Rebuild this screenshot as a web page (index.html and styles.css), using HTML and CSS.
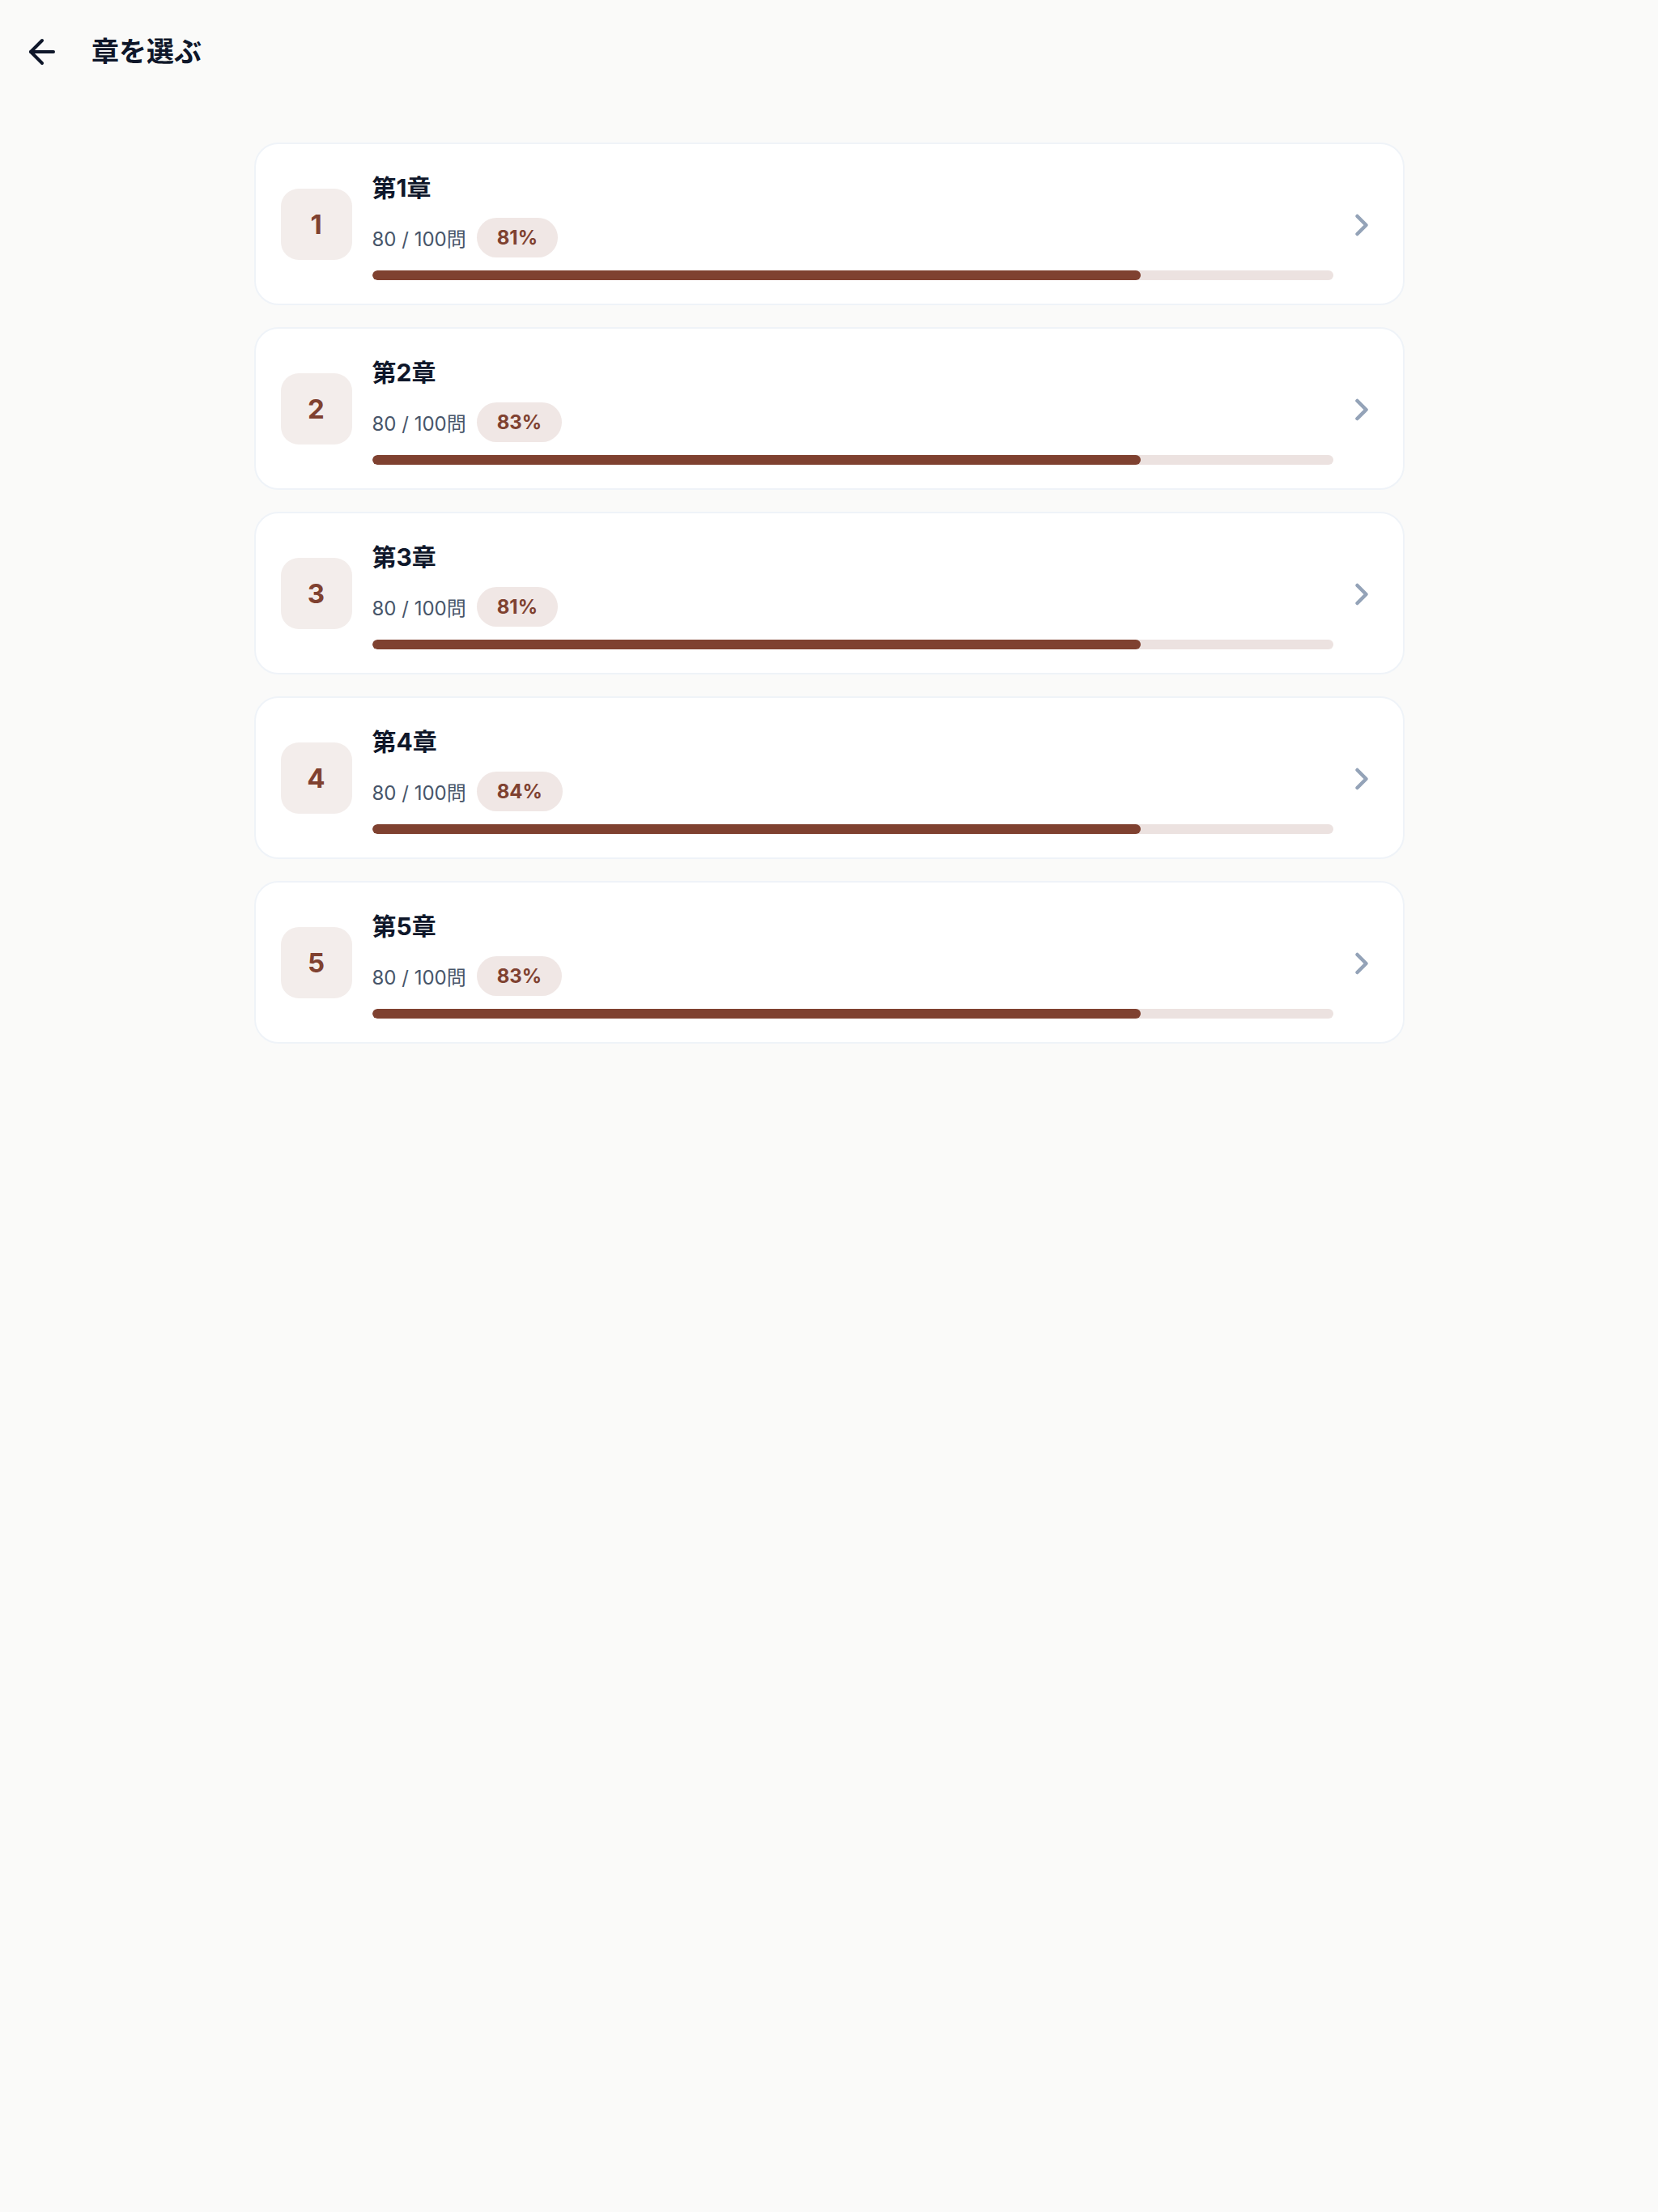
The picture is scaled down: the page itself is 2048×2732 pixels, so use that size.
FILE: index.html
```html
<!DOCTYPE html>
<html lang="ja">
<head>
<meta charset="utf-8">
<title>章を選ぶ</title>
<link rel="stylesheet" href="styles.css">
</head>
<body>
<header class="header">
  <svg class="back" viewBox="0 0 24 24" fill="none" stroke="currentColor" stroke-width="2" stroke-linecap="round" stroke-linejoin="round"><path d="m12 19-7-7 7-7"/><path d="M19 12H5"/></svg>
  <h1 class="title">章を選ぶ</h1>
</header>
<main class="list">
  <div class="card">
    <div class="badge">1</div>
    <div class="info">
      <div class="name">第1章</div>
      <div class="row"><span class="count">80 / 100問</span><span class="pill">81%</span></div>
      <div class="track"><div class="fill" style="width:80%"></div></div>
    </div>
    <svg class="chev" viewBox="0 0 24 24" fill="none" stroke="currentColor" stroke-width="2.5" stroke-linecap="round" stroke-linejoin="round"><path d="m9 18 6-6-6-6"/></svg>
  </div>
  <div class="card">
    <div class="badge">2</div>
    <div class="info">
      <div class="name">第2章</div>
      <div class="row"><span class="count">80 / 100問</span><span class="pill">83%</span></div>
      <div class="track"><div class="fill" style="width:80%"></div></div>
    </div>
    <svg class="chev" viewBox="0 0 24 24" fill="none" stroke="currentColor" stroke-width="2.5" stroke-linecap="round" stroke-linejoin="round"><path d="m9 18 6-6-6-6"/></svg>
  </div>
  <div class="card">
    <div class="badge">3</div>
    <div class="info">
      <div class="name">第3章</div>
      <div class="row"><span class="count">80 / 100問</span><span class="pill">81%</span></div>
      <div class="track"><div class="fill" style="width:80%"></div></div>
    </div>
    <svg class="chev" viewBox="0 0 24 24" fill="none" stroke="currentColor" stroke-width="2.5" stroke-linecap="round" stroke-linejoin="round"><path d="m9 18 6-6-6-6"/></svg>
  </div>
  <div class="card">
    <div class="badge">4</div>
    <div class="info">
      <div class="name">第4章</div>
      <div class="row"><span class="count">80 / 100問</span><span class="pill">84%</span></div>
      <div class="track"><div class="fill" style="width:80%"></div></div>
    </div>
    <svg class="chev" viewBox="0 0 24 24" fill="none" stroke="currentColor" stroke-width="2.5" stroke-linecap="round" stroke-linejoin="round"><path d="m9 18 6-6-6-6"/></svg>
  </div>
  <div class="card">
    <div class="badge">5</div>
    <div class="info">
      <div class="name">第5章</div>
      <div class="row"><span class="count">80 / 100問</span><span class="pill">83%</span></div>
      <div class="track"><div class="fill" style="width:80%"></div></div>
    </div>
    <svg class="chev" viewBox="0 0 24 24" fill="none" stroke="currentColor" stroke-width="2.5" stroke-linecap="round" stroke-linejoin="round"><path d="m9 18 6-6-6-6"/></svg>
  </div>
</main>
</body>
</html>
```
FILE: styles.css
```css
html, body {
  margin: 0;
  padding: 0;
}
body {
  background: #fafaf9;
  font-family: Inter, "Noto Sans CJK JP", sans-serif;
  color: #0f172a;
  min-height: 2732px;
}
.header {
  height: 128px;
  display: flex;
  align-items: center;
  padding-left: 28px;
  gap: 37px;
}
.back {
  width: 48px;
  height: 48px;
  color: #0f172a;
  flex: none;
}
.title {
  margin: 0;
  font-size: 34px;
  font-weight: 700;
  line-height: 1.4;
  color: #0f172a;
}
.list {
  width: 1421px;
  margin: 48px auto 0;
  display: flex;
  flex-direction: column;
  gap: 27px;
}
.card {
  box-sizing: border-box;
  height: 201px;
  background: #ffffff;
  border: 2px solid #eff3f8;
  border-radius: 30px;
  display: flex;
  align-items: center;
  padding: 0 29px 0 31px;
}
.badge {
  width: 88px;
  height: 88px;
  flex: none;
  border-radius: 22px;
  background: #f3edeb;
  color: #7f4130;
  font-size: 33px;
  font-weight: 700;
  display: flex;
  align-items: center;
  justify-content: center;
  margin-right: 25px;
}
.info {
  flex: 1;
  display: flex;
  flex-direction: column;
  padding-top: 4px;
}
.name {
  font-size: 30px;
  font-weight: 700;
  line-height: 42px;
  color: #0f172a;
}
.row {
  margin-top: 15px;
  height: 50px;
  display: flex;
  align-items: center;
  gap: 13px;
}
.count {
  font-size: 24px;
  color: #475569;
}
.pill {
  height: 49px;
  box-sizing: border-box;
  padding: 0 25px;
  border-radius: 25px;
  background: #f0e7e5;
  color: #7f4130;
  font-size: 24px;
  font-weight: 700;
  display: flex;
  align-items: center;
}
.track {
  margin-top: 16px;
  height: 12px;
  border-radius: 6px;
  background: #ece2e0;
  overflow: hidden;
}
.fill {
  height: 100%;
  border-radius: 6px;
  background: #7f4130;
}
.chev {
  width: 44px;
  height: 44px;
  flex: none;
  margin-left: 13px;
  margin-top: 2px;
  color: #94a3b8;
}
```
